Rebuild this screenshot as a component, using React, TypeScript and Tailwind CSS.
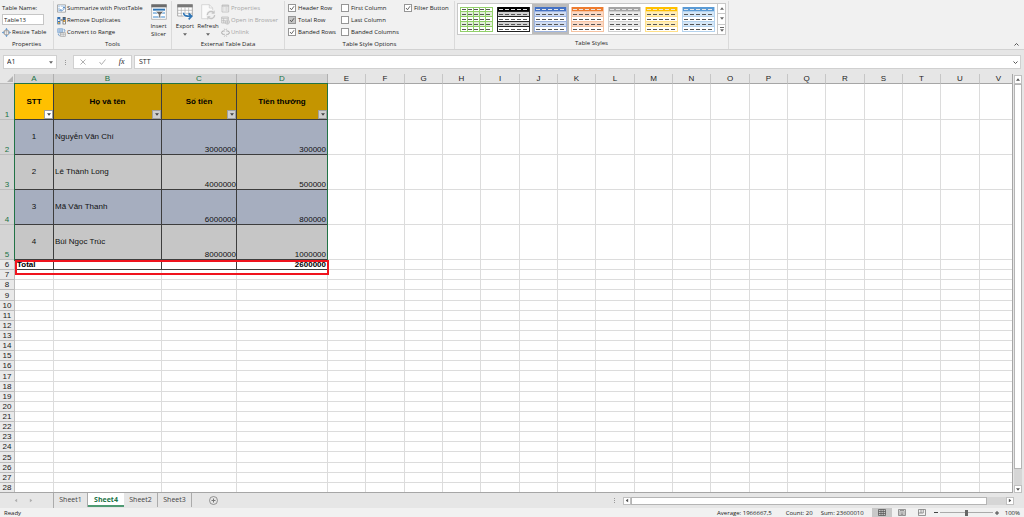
import { useState } from 'react'
import type { ReactNode } from 'react'
import clsx from 'clsx'

const COLUMNS = 'ABCDEFGHIJKLMNOPQRSTUV'.split('')

const HEADERS = ['STT', 'Họ và tên', 'Số tiền', 'Tiền thưởng']

const PEOPLE = [
  { id: 1, name: 'Nguyễn Văn Chí', amount: 3000000, bonus: 300000 },
  { id: 2, name: 'Lê Thành Long', amount: 4000000, bonus: 500000 },
  { id: 3, name: 'Mã Văn Thanh', amount: 6000000, bonus: 800000 },
  { id: 4, name: 'Bùi Ngọc Trúc', amount: 8000000, bonus: 1000000 },
]

const SHEETS = ['Sheet1', 'Sheet4', 'Sheet2', 'Sheet3']

const STYLES = [
  { name: 'Light green', head: '#ffffff', band: '#e2f0d9', line: '#92d06a', grid: true },
  { name: 'Black', head: '#000000', band: '#d0d0d0', line: '#222222' },
  { name: 'Blue', head: '#4472c4', band: '#d0dcf2', line: '#9db4e0' },
  { name: 'Orange', head: '#ed7d31', band: '#fbd9c5', line: '#f6c3a2' },
  { name: 'Gray', head: '#a5a5a5', band: '#e9e9e9', line: '#d0d0d0' },
  { name: 'Gold', head: '#ffc000', band: '#ffedb8', line: '#ffe08a' },
  { name: 'Light blue', head: '#5b9bd5', band: '#d5e7f7', line: '#b5d3ee' },
]

function Caret({ className }: { className?: string }) {
  return (
    <svg viewBox="0 0 6 4" className={clsx('h-[3px] w-[4px]', className)} fill="currentColor" aria-hidden="true">
      <path d="M0 0h6L3 4z" />
    </svg>
  )
}

function Group({ title, className, children }: { title: string; className?: string; children: ReactNode }) {
  return (
    <section className={clsx('flex shrink-0 flex-col border-r border-[#dadada]', className)}>
      <div className="flex h-[38px] pt-px">{children}</div>
      <h2 className="text-center leading-[12px]">{title}</h2>
    </section>
  )
}

function Command({ icon, label, disabled }: { icon: ReactNode; label: string; disabled?: boolean }) {
  return (
    <button
      disabled={disabled}
      className="flex h-3 items-center gap-px whitespace-nowrap disabled:text-[#a6a6a6]"
    >
      {icon}
      {label}
    </button>
  )
}

function Check({ label, initial, muted }: { label: string; initial?: boolean; muted?: boolean }) {
  const [checked, setChecked] = useState(!!initial)
  return (
    <label className="flex h-3 items-center gap-[2px] whitespace-nowrap">
      <span className="relative flex">
        <input
          type="checkbox"
          checked={checked}
          onChange={e => setChecked(e.target.checked)}
          className={clsx('size-[8px] appearance-none border border-[#969696]', muted ? 'bg-[#c4c4c4]' : 'bg-white')}
        />
        {checked && (
          <svg viewBox="0 0 16 16" className="pointer-events-none absolute inset-0 size-[8px]" fill="none" stroke="#444" strokeWidth="1.6" aria-hidden="true">
            <path d="M4 8l3 3.500 5-7" />
          </svg>
        )}
      </span>
      {label}
    </label>
  )
}

function PivotIcon() {
  return (
    <svg viewBox="0 0 27 27" className="size-[9px]" aria-hidden="true">
      <path d="M1.500 2.500h24v22h-24z" fill="#fff" stroke="#888" strokeWidth="2" />
      <path d="M3 4h6v5H3zM11 4h13v5H11zM3 11h6v12H3z" fill="#c3d7ec" />
      <path d="M10 19h6c4 0 5-3 5-9M13 15l-4 4 4 4M17 13l4-4 4 4" fill="none" stroke="#2b6cb5" strokeWidth="2" />
    </svg>
  )
}

function DuplicatesIcon() {
  return (
    <svg viewBox="0 0 27 27" className="size-[9px]" aria-hidden="true">
      <path d="M1 3h9v22H1z" fill="#2f6db0" />
      <path d="M3 10h5v5H3z" fill="#fff" />
      <path d="M3 18h5v5H3z" fill="#f3b44c" />
      <path d="M17 3h9v22h-9z" fill="#555" />
      <path d="M19 5h5v6h-5z" fill="#2f6db0" />
      <path d="M19 18h5v5h-5z" fill="#fff" />
      <path d="M19 12h5v5h-5z" fill="#f3b44c" />
      <path d="M10 12h6M13 9l3 3-3 3" fill="none" stroke="#444" strokeWidth="1.500" />
    </svg>
  )
}

function ConvertIcon() {
  return (
    <svg viewBox="0 0 27 27" className="size-[9px]" aria-hidden="true">
      <path d="M2 2h15v12H2z" fill="#d9e7f5" stroke="#5a8dc4" strokeWidth="1.500" />
      <path d="M2 6h15M7 2v12M12 2v12M2 10h15" stroke="#5a8dc4" />
      <path d="M10 14h15v11H10z" fill="#fff" stroke="#777" strokeWidth="1.500" />
      <path d="M10 19h15M15 14v11M20 14v11" stroke="#777" />
      <path d="M20 4c4 0 4 4 3 7M4 17c0 4 1 6 4 6" fill="none" stroke="#2b6cb5" strokeWidth="2" />
    </svg>
  )
}

function ResizeIcon() {
  return (
    <svg viewBox="0 0 27 27" className="size-[9px]" aria-hidden="true">
      <path d="M7 8h13v11H7z" fill="#fff" stroke="#777" strokeWidth="2" />
      <path d="M7 12h13M13.500 8v11" stroke="#777" />
      <path d="M13.500 0l4 5h-8zM13.500 27l4-5h-8zM0 13.500l5-4v8zM27 13.500l-5-4v8z" fill="#3f7fc1" />
    </svg>
  )
}

function SlicerIcon() {
  return (
    <svg viewBox="0 0 48 48" className="size-4" aria-hidden="true">
      <path d="M2 2h44v44H2z" fill="#fff" stroke="#9a9a9a" strokeWidth="2" />
      <path d="M1 1h46v9H1z" fill="#6b6b6b" />
      <path d="M6 14h36v6H6z" fill="#2f75b5" />
      <path d="M6 24h36v6H6zM6 36h36v6H6z" fill="#9cc3e6" />
      <path d="M14 22h24L29 32v12l-6-4v-8z" fill="#666" stroke="#fff" strokeWidth="2" />
    </svg>
  )
}

function ExportIcon() {
  return (
    <svg viewBox="0 0 48 48" className="size-4" aria-hidden="true">
      <path d="M2 2h44v34H2z" fill="#fff" stroke="#888" strokeWidth="2" />
      <path d="M1 1h46v9H1z" fill="#777" />
      <path d="M2 19h44M2 28h44M13 10v26M24 10v26M35 10v26" stroke="#aaa" strokeWidth="2" />
      <path d="M20 26c0 9 5 11 22 11" fill="none" stroke="#fff" strokeWidth="9" />
      <path d="M20 26c0 9 5 11 22 11M35 28l9 9-9 9" fill="none" stroke="#2f75b5" strokeWidth="5" />
    </svg>
  )
}

function RefreshIcon() {
  return (
    <svg viewBox="0 0 48 48" className="size-4" fill="none" aria-hidden="true">
      <path d="M5 2h23l10 10v32H5z" fill="#fafafa" stroke="#c8c8c8" strokeWidth="2" />
      <path d="M28 2v10h10" stroke="#c8c8c8" strokeWidth="2" />
      <circle cx="33" cy="33" r="15" fill="#f1f1f1" />
      <path d="M22 33a11 11 0 0 1 19-7M44 33a11 11 0 0 1-19 7" stroke="#c4c4c4" strokeWidth="4" />
      <path d="M44 19v10H34zM22 47V37h10z" fill="#c4c4c4" />
    </svg>
  )
}

function PropertiesIcon() {
  return (
    <svg viewBox="0 0 27 27" className="size-[9px]" fill="none" stroke="#b4b4b4" strokeWidth="2" aria-hidden="true">
      <path d="M3 3h20v21H3z" />
      <path d="M3 6h20" strokeWidth="3" />
      <path d="M7 12h3M13 12h7M7 18h3M13 18h7" />
    </svg>
  )
}

function BrowserIcon() {
  return (
    <svg viewBox="0 0 27 27" className="size-[9px]" fill="none" stroke="#b4b4b4" strokeWidth="2" aria-hidden="true">
      <path d="M2 3h20v18H2z" />
      <path d="M2 7h20M8 7v14M2 14h10" />
      <circle cx="19" cy="18" r="6.500" fill="#f1f1f1" />
      <path d="M13 18h12M19 12v12" />
    </svg>
  )
}

function UnlinkIcon() {
  return (
    <svg viewBox="0 0 27 27" className="size-[9px]" fill="none" stroke="#a8a8a8" strokeWidth="3" aria-hidden="true">
      <path d="M11 9H7a5 5 0 0 0 0 10h4M16 9h4a5 5 0 0 1 0 10h-4" />
      <path d="M10 2l2 4M17 2l-2 4M10 26l2-4M17 26l-2-4" strokeWidth="2" />
    </svg>
  )
}

function StyleThumb({ style }: { style: (typeof STYLES)[number] }) {
  const rows = [0, 1, 2, 3, 4]
  return (
    <svg viewBox="0 0 33 25" className="h-[25px] w-[33px]" shapeRendering="crispEdges" aria-hidden="true">
      <rect width="33" height="25" fill="#fff" />
      {rows.map(r => (
        <g key={r}>
          <rect y={r * 5} width="33" height="5" fill={r === 0 ? style.head : r % 2 ? style.band : '#fff'} />
          <path d={`M0 ${r * 5 + 4.5}h33`} stroke={style.line} />
        </g>
      ))}
      <path d="M0.500 0v25M32.500 0v25" stroke={style.line} />
      {style.grid && <path d="M0 0.500h33M7.500 0v25M13.500 0v25M19.500 0v25M25.500 0v25" stroke={style.line} />}
      {rows.map(r =>
        rows.map(c => (
          <rect
            key={`${r}-${c}`}
            x={2 + c * 6}
            y={r * 5 + 2}
            width="4"
            height="1"
            fill={r === 0 && !style.grid ? '#e8e8e8' : '#555'}
          />
        )),
      )}
    </svg>
  )
}

function Ribbon() {
  const [selected, setSelected] = useState('Blue')
  return (
    <header className="relative flex h-[50px] border-b border-[#d2d2d2] bg-[#f1f1f1] pt-px">
      <Group title="Properties" className="w-[54px]">
        <div className="flex w-full flex-col pl-[2px]">
          <label htmlFor="table-name" className="h-3 leading-3">Table Name:</label>
          <input
            id="table-name"
            defaultValue="Table13"
            className="h-[11px] w-[42px] border border-[#c6c6c6] bg-white px-px"
          />
          <div className="mt-px"><Command icon={<ResizeIcon />} label="Resize Table" /></div>
        </div>
      </Group>

      <Group title="Tools" className="w-[118px]">
        <div className="flex w-[92px] flex-col pl-[3px]">
          <Command icon={<PivotIcon />} label="Summarize with PivotTable" />
          <Command icon={<DuplicatesIcon />} label="Remove Duplicates" />
          <Command icon={<ConvertIcon />} label="Convert to Range" />
        </div>
        <button className="flex flex-1 flex-col items-center pt-[2px] leading-[8px]">
          <SlicerIcon />
          <span className="mt-[2px]">Insert</span>
          <span>Slicer</span>
        </button>
      </Group>

      <Group title="External Table Data" className="w-[113px]">
        <button className="flex w-[26px] flex-col items-center pt-[2px] leading-[8px]">
          <ExportIcon />
          <span className="mt-[2px]">Export</span>
          <Caret className="mt-[3px] text-[#666]" />
        </button>
        <button className="flex w-5 flex-col items-center pt-[2px] leading-[8px]">
          <RefreshIcon />
          <span className="mt-[2px]">Refresh</span>
          <Caret className="mt-[3px] text-[#666]" />
        </button>
        <div className="flex flex-col pl-[3px]">
          <Command disabled icon={<PropertiesIcon />} label="Properties" />
          <Command disabled icon={<BrowserIcon />} label="Open in Browser" />
          <Command disabled icon={<UnlinkIcon />} label="Unlink" />
        </div>
      </Group>

      <Group title="Table Style Options" className="w-[170px]">
        <div className="w-[56px] pl-[3px]">
          <Check label="Header Row" initial />
          <Check label="Total Row" initial muted />
          <Check label="Banded Rows" initial />
        </div>
        <div className="w-[63px]">
          <Check label="First Column" />
          <Check label="Last Column" />
          <Check label="Banded Columns" />
        </div>
        <div>
          <Check label="Filter Button" initial />
        </div>
      </Group>

      <Group title="Table Styles" className="w-[274px]">
        <div className="ml-[2px] mt-px flex h-[32px] border border-[#c8c8c8] bg-white">
          {STYLES.map(s => (
            <button
              key={s.name}
              aria-label={s.name}
              onClick={() => setSelected(s.name)}
              className={clsx('flex w-[37px] items-center justify-center border-2', s.name === selected ? 'border-[#bcbcbc] bg-[#bcbcbc]' : 'border-transparent')}
            >
              <StyleThumb style={s} />
            </button>
          ))}
          <div className="flex w-2 flex-col divide-y divide-[#c8c8c8] border-l border-[#c8c8c8] text-[#666]">
            <button aria-label="Previous styles" className="flex flex-1 items-center justify-center"><Caret className="rotate-180" /></button>
            <button aria-label="Next styles" className="flex flex-1 items-center justify-center"><Caret /></button>
            <button aria-label="More styles" className="flex flex-1 flex-col items-center justify-center gap-px">
              <span className="h-px w-[4px] bg-current" />
              <Caret />
            </button>
          </div>
        </div>
      </Group>

      <button aria-label="Collapse the ribbon" className="ml-auto self-end px-[5px] py-[3px]">
        <svg viewBox="0 0 10 6" className="h-[3px] w-[5px]" fill="none" stroke="#555" strokeWidth="2" aria-hidden="true">
          <path d="M1 5l4-4 4 4" />
        </svg>
      </button>
    </header>
  )
}

function FormulaBar() {
  return (
    <div className="flex h-6 items-center bg-[#e6e6e6] px-[3px]">
      <div className="flex h-[14px] w-[54px] items-center border border-[#d0d0d0] bg-white pr-[3px]">
        <input aria-label="Name box" defaultValue="A1" className="w-0 flex-1 px-[3px] text-[7px]" />
        <Caret className="text-[#666]" />
      </div>
      <div className="flex w-4 flex-col items-center gap-px">
        <i className="size-px bg-[#999]" />
        <i className="size-px bg-[#999]" />
        <i className="size-px bg-[#999]" />
      </div>
      <div className="flex h-[14px] w-[59px] items-center justify-around border border-[#d0d0d0] bg-white">
        <button aria-label="Cancel">
          <svg viewBox="0 0 12 12" className="size-[6px]" stroke="#b0b0b0" strokeWidth="2" aria-hidden="true">
            <path d="M1 1l10 10M11 1L1 11" />
          </svg>
        </button>
        <button aria-label="Enter">
          <svg viewBox="0 0 14 12" className="h-[6px] w-[7px]" fill="none" stroke="#b0b0b0" strokeWidth="2" aria-hidden="true">
            <path d="M1 6l4 5 8-10" />
          </svg>
        </button>
        <button aria-label="Insert function" className="font-['Liberation_Serif',serif] text-[8px] leading-[8px] italic">
          fx
        </button>
      </div>
      <div className="ml-[2px] flex h-[14px] flex-1 items-center border border-[#d0d0d0] bg-white pr-[2px]">
        <input aria-label="Formula" defaultValue="STT" className="w-0 flex-1 px-1 text-[7px]" />
        <svg viewBox="0 0 10 6" className="h-[3px] w-[5px]" fill="none" stroke="#555" strokeWidth="2" aria-hidden="true">
          <path d="M1 1l4 4 4-4" />
        </svg>
      </div>
    </div>
  )
}

function RowHeader({ n, selected }: { n: number; selected?: boolean }) {
  return (
    <th
      scope="row"
      className={clsx(
        'border-r border-b border-[#bdbdbd] p-0 pt-px text-center align-bottom font-normal',
        selected ? 'bg-[#d4d4d4] text-[#217346]' : 'bg-[#e9e9e9] text-[#222]',
      )}
    >
      {n}
    </th>
  )
}

function BlankCells({ count }: { count: number }) {
  return (
    <>
      {Array.from({ length: count }, (_, i) => (
        <td key={i} className="border-r border-b border-[#dcdcdc] p-0" />
      ))}
    </>
  )
}

function Sheet() {
  const blank = COLUMNS.length - HEADERS.length
  const cell = 'border-r border-b border-[#3d3d3d]'
  return (
    <div className="relative min-w-0 flex-1 overflow-hidden border-r border-b border-[#a6a6a6] bg-white font-['Liberation_Sans',Arial,sans-serif] text-[8px] leading-[8px] text-[#111]">
      <table className="w-max table-fixed border-separate border-spacing-0">
        <colgroup>
          <col className="w-[15px]" />
          <col className="w-[39px]" />
          <col className="w-[108px]" />
          <col className="w-[75px]" />
          <col className="w-[91px]" />
          {COLUMNS.slice(4).map((c, i) => (
            <col key={c} className={i % 3 === 1 ? 'w-[39px]' : 'w-[38px]'} />
          ))}
        </colgroup>
        <thead>
          <tr className="h-[10px]">
            <th className="border-r border-b border-[#bdbdbd] bg-[#e6e6e6] p-0">
              <svg viewBox="0 0 6 6" className="ml-auto mr-px size-[6px]" fill="#b4b4b4" aria-hidden="true">
                <path d="M6 0v6H0z" />
              </svg>
            </th>
            {COLUMNS.map((c, i) => (
              <th
                key={c}
                scope="col"
                className={clsx(
                  'border-r border-b p-0 pt-px text-center font-normal',
                  i < 4 ? 'border-[#b0b0b0] bg-[#d4d4d4] text-[#217346]' : 'border-r-[#c6c6c6] border-b-[#a6a6a6] bg-[#e6e6e6] text-[#222]',
                )}
              >
                {c}
              </th>
            ))}
          </tr>
        </thead>
        <tbody>
          <tr className="h-[36px]">
            <RowHeader n={1} selected />
            {HEADERS.map((h, i) => (
              <td key={h} className={clsx(cell, 'relative p-0 text-center font-bold text-black', i === 0 ? 'bg-[#ffc000]' : 'bg-[#c49500]')}>
                {h}
                <button
                  aria-label={`Filter ${h}`}
                  className={clsx('absolute right-0 bottom-0 flex size-[9px] items-center justify-center border border-[#a0a0a0] text-[#444]', i === 0 ? 'bg-white' : 'bg-[#cfcfcf]')}
                >
                  <Caret />
                </button>
              </td>
            ))}
            <BlankCells count={blank} />
          </tr>
          {PEOPLE.map((p, i) => (
            <tr key={p.id} className={clsx('h-[35px]', i % 2 ? '[&>td:nth-child(-n+5)]:bg-[#c6c6c6]' : '[&>td:nth-child(-n+5)]:bg-[#a6aebf]')}>
              <RowHeader n={p.id + 1} selected />
              <td className={clsx(cell, 'p-0 text-center')}>{p.id}</td>
              <td className={clsx(cell, 'p-0 pl-px')}>{p.name}</td>
              <td className={clsx(cell, 'p-0 text-right align-bottom')}>{p.amount}</td>
              <td className={clsx(cell, 'p-0 pr-px text-right align-bottom')}>{p.bonus}</td>
              <BlankCells count={blank} />
            </tr>
          ))}
          <tr className="h-[10px] font-bold text-black">
            <RowHeader n={6} />
            <td className={clsx(cell, 'p-0 pt-px pl-[2px]')}>Total</td>
            <td className={clsx(cell, 'p-0')} />
            <td className={clsx(cell, 'p-0')} />
            <td className={clsx(cell, 'p-0 pt-px pr-px text-right')}>2600000</td>
            <BlankCells count={blank} />
          </tr>
          {Array.from({ length: 22 }, (_, i) => (
            <tr key={i} className={i % 8 === 2 ? 'h-[11px]' : 'h-[10px]'}>
              <RowHeader n={i + 7} />
              <BlankCells count={COLUMNS.length} />
            </tr>
          ))}
        </tbody>
      </table>
      {/* selected range A1:D5 */}
      <div className="pointer-events-none absolute top-[9px] left-[14px] h-[178px] w-[314px] border border-[#217346]" />
      {/* marker round the total row */}
      <div className="pointer-events-none absolute top-[186px] left-[15px] h-[15px] w-[314px] border-2 border-[#f0141e]" />
    </div>
  )
}

function VerticalScroll() {
  return (
    <div className="flex w-[11px] flex-col bg-[#e6e6e6] pt-px pr-[2px] pl-px">
      <button aria-label="Scroll up" className="flex h-[9px] items-center justify-center border border-[#c0c0c0] bg-white text-[#555]"><Caret className="rotate-180" /></button>
      <div className="flex-1 bg-[#d6d6d6]">
        <div className="h-[96%] border border-[#b5b5b5] bg-white" />
      </div>
      <button aria-label="Scroll down" className="flex h-[8px] items-center justify-center border border-[#c0c0c0] bg-white text-[#555]"><Caret /></button>
    </div>
  )
}

function TabBar() {
  const [active, setActive] = useState('Sheet4')
  return (
    <nav className="flex h-[15px] items-center bg-[#e6e6e6]">
      <div className="flex w-[53px] justify-center gap-[11px] pr-[6px] text-[#b0b0b0]">
        <button aria-label="Previous sheet"><Caret className="rotate-90" /></button>
        <button aria-label="Next sheet"><Caret className="-rotate-90" /></button>
      </div>
      <div className="flex self-stretch border-l border-[#ababab] pb-px">
        {SHEETS.map(s => (
          <button
            key={s}
            onClick={() => setActive(s)}
            className={clsx(
              'text-[7px]',
              s === active
                ? 'w-9 border-b-2 border-[#4f9a73] bg-white pt-[2px] font-bold text-[#217346]'
                : 'w-[34px] border-r border-[#ababab] text-[#444]',
            )}
          >
            {s}
          </button>
        ))}
      </div>
      <button aria-label="New sheet" className="ml-[17px]">
        <svg viewBox="0 0 18 18" className="size-[9px]" fill="none" stroke="#777" strokeWidth="1.500" aria-hidden="true">
          <circle cx="9" cy="9" r="8" />
          <path d="M9 5v8M5 9h8" strokeWidth="2" />
        </svg>
      </button>
      <div className="ml-auto flex w-2/5 items-center">
        <div className="flex w-[9px] flex-col gap-px">
          <i className="size-px bg-[#999]" />
          <i className="size-px bg-[#999]" />
          <i className="size-px bg-[#999]" />
        </div>
        <button aria-label="Scroll left" className="flex size-[8px] items-center justify-center border border-[#c0c0c0] bg-white text-[#555]"><Caret className="rotate-90" /></button>
        <div className="h-[8px] flex-1 bg-[#d6d6d6]">
          <div className="h-full w-[95%] border border-[#b5b5b5] bg-white" />
        </div>
        <button aria-label="Scroll right" className="mr-[10px] flex size-[8px] items-center justify-center border border-[#c0c0c0] bg-white text-[#555]"><Caret className="-rotate-90" /></button>
      </div>
    </nav>
  )
}

function StatusBar() {
  const [zoom, setZoom] = useState(100)
  return (
    <footer className="flex h-[9px] items-center bg-[#f1f1f1] px-1">
      <span>Ready</span>
      <div className="ml-auto flex items-center">
        <span className="mr-[14px]">Average: 1966667,5</span>
        <span className="mr-2">Count: 20</span>
        <span className="mr-2">Sum: 23600010</span>
        <button aria-label="Normal view" className="flex h-[9px] w-5 items-center justify-center bg-[#c8c8c8]">
          <svg viewBox="0 0 16 14" className="h-[7px] w-2" fill="none" stroke="#555" strokeWidth="1.500" aria-hidden="true">
            <path d="M1 1h14v12H1zM1 5h14M1 9h14M6 1v12M10.500 1v12" />
          </svg>
        </button>
        <button aria-label="Page layout view" className="flex w-5 justify-center">
          <svg viewBox="0 0 16 14" className="h-[7px] w-2" fill="none" stroke="#777" strokeWidth="1.500" aria-hidden="true">
            <path d="M1 1h14v12H1zM4 3h8v10M4 3v10M6 6h4M6 8.500h4M6 11h4" />
          </svg>
        </button>
        <button aria-label="Page break view" className="flex w-5 justify-center">
          <svg viewBox="0 0 16 14" className="h-[7px] w-2" fill="none" stroke="#777" strokeWidth="1.500" aria-hidden="true">
            <path d="M1 1h14v12H1zM6 1v7M10.500 1v7H1" />
          </svg>
        </button>
        <button aria-label="Zoom out" className="ml-[2px] flex h-[7px] w-[6px] items-center"><span className="h-px w-[4px] bg-[#444]" /></button>
        <input
          type="range"
          aria-label="Zoom"
          min={10}
          max={190}
          value={zoom}
          onChange={e => setZoom(Number(e.target.value))}
          className="h-[6px] w-[53px] appearance-none bg-[linear-gradient(#aaa,#aaa)] bg-[length:100%_1px] bg-center bg-no-repeat [&::-webkit-slider-thumb]:h-[6px] [&::-webkit-slider-thumb]:w-[3px] [&::-webkit-slider-thumb]:appearance-none [&::-webkit-slider-thumb]:bg-[#666]"
        />
        <button aria-label="Zoom in" className="ml-[2px]">
          <svg viewBox="0 0 8 8" className="size-[4px]" stroke="#444" strokeWidth="2" aria-hidden="true">
            <path d="M4 0v8M0 4h8" />
          </svg>
        </button>
        <span className="ml-[6px]">{zoom}%</span>
      </div>
    </footer>
  )
}

export default function App() {
  return (
    <div className="flex h-screen flex-col overflow-hidden bg-[#e6e6e6] font-['Open_Sans','Noto_Sans',sans-serif] text-[6px] leading-[8px] text-[#1c1c1c]">
      <Ribbon />
      <FormulaBar />
      <main className="flex min-h-0 flex-1">
        <Sheet />
        <VerticalScroll />
      </main>
      <TabBar />
      <StatusBar />
    </div>
  )
}
